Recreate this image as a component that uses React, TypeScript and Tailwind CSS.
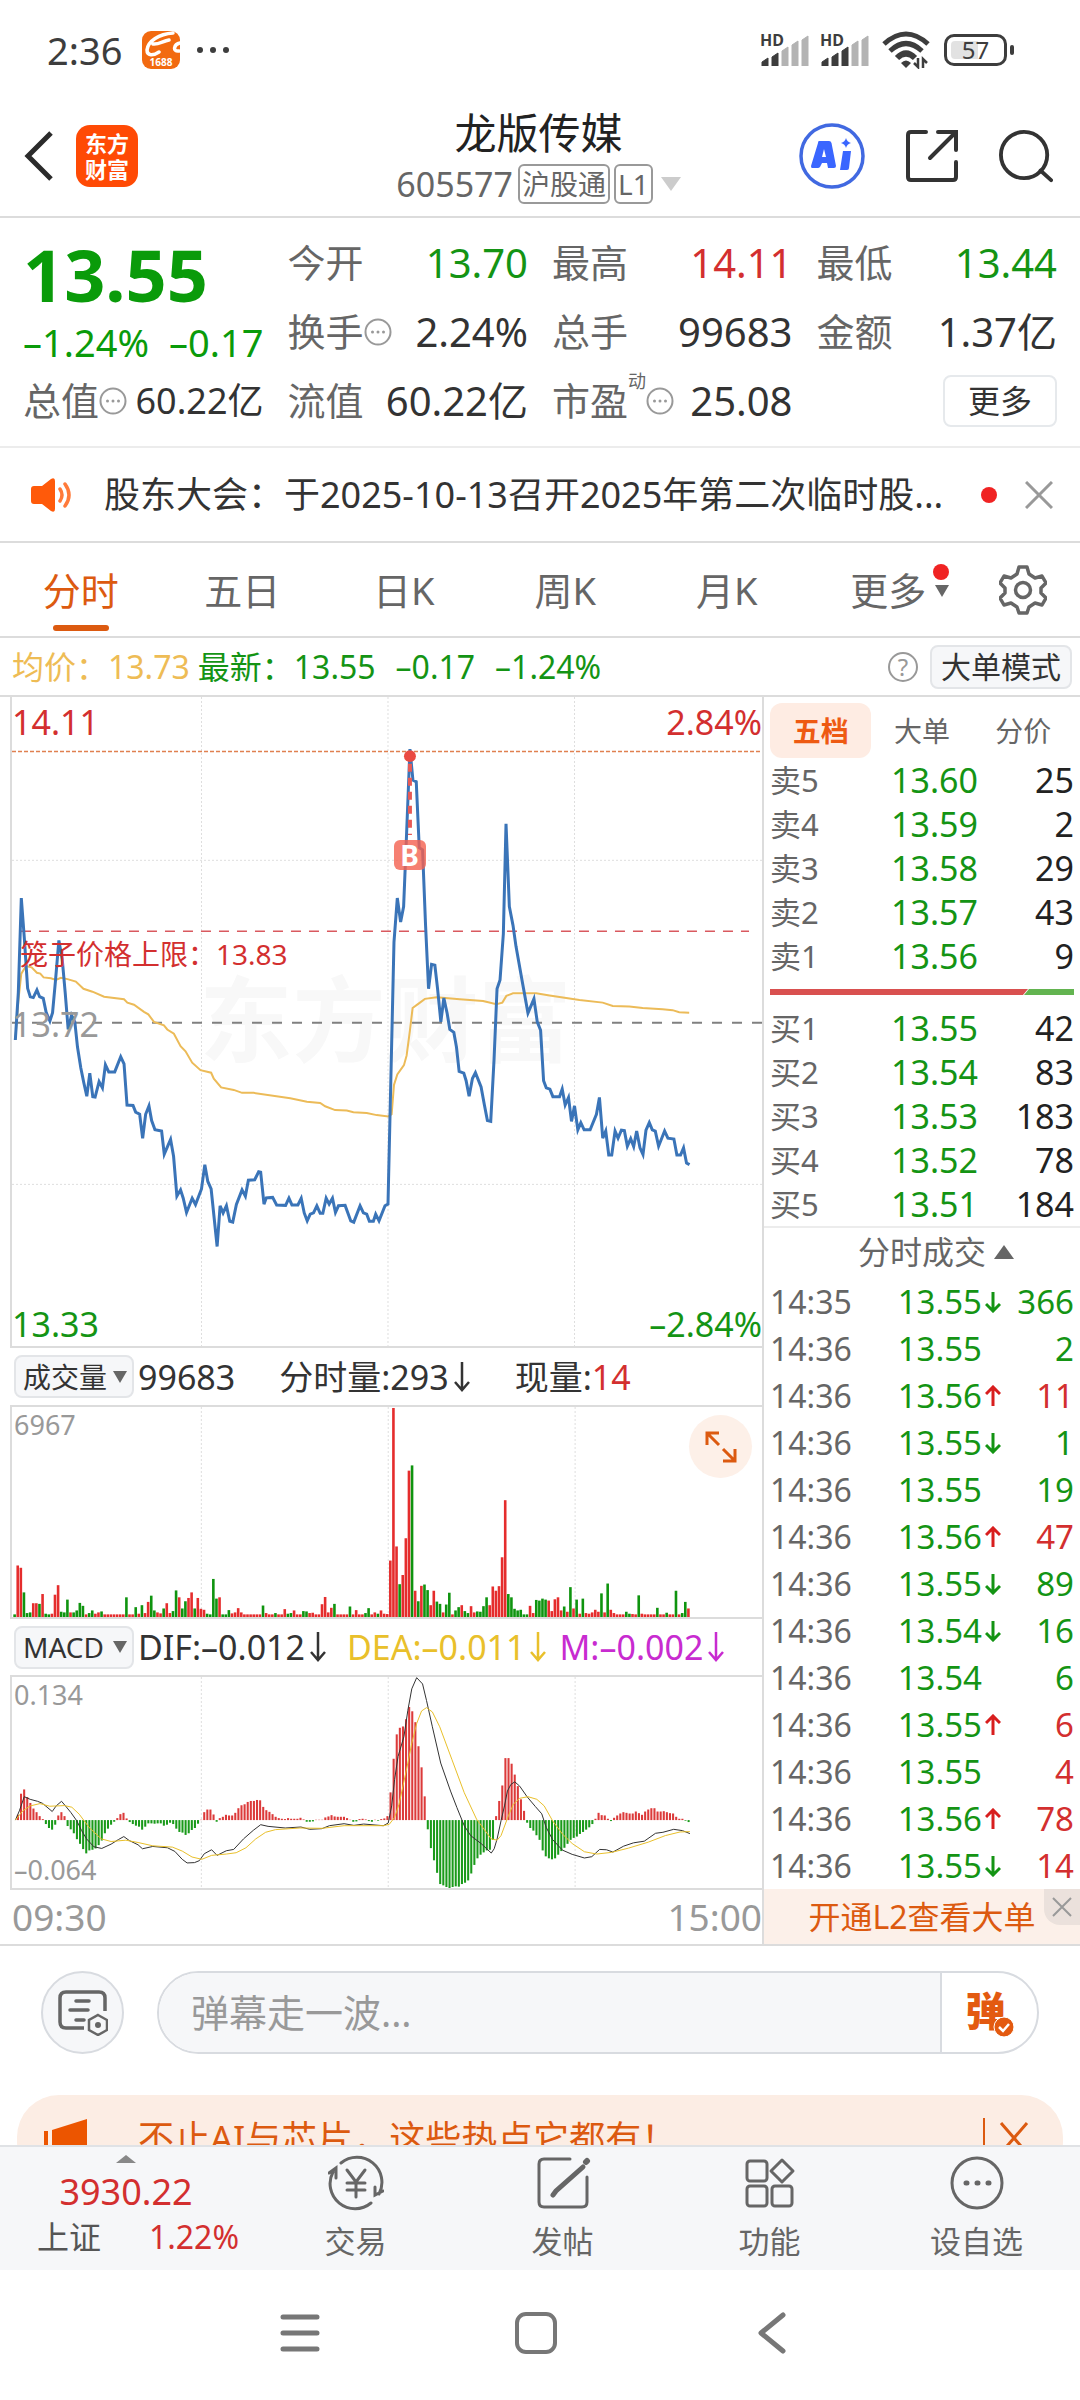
import type { ReactNode } from "react";

const PRICE_LINE =
  "43,833 52,720 61,495 70,590 80,710 88,730 97,732 108,714 116,730 127,734 136,768 147,788 155,768 164,690 174,596 184,640 193,720 202,808 212,774 222,790 230,850 240,900 249,935 258,967 267,912 276,968 283,969 295,932 305,947 314,892 324,909 342,909 360,873 370,890 379,988 397,989 405,1005 417,1010 426,1067 435,1010 445,990 453,1025 463,1047 483,1050 491,1105 510,1070 519,1110 529,1205 540,1190 548,1210 558,1244 575,1210 585,1225 603,1188 613,1130 622,1170 632,1188 650,1325 659,1228 668,1245 678,1228 688,1265 697,1267 708,1225 725,1190 735,1205 744,1167 763,1166 775,1147 781,1148 791,1224 798,1209 817,1208 829,1226 856,1227 866,1210 875,1226 893,1226 903,1210 912,1245 921,1264 930,1248 940,1245 950,1228 960,1246 968,1246 978,1210 987,1224 997,1210 1006,1244 1015,1228 1035,1227 1052,1264 1061,1267 1080,1228 1090,1245 1100,1248 1108,1265 1120,1265 1127,1248 1137,1264 1155,1228 1164,1224 1182,600 1192,495 1202,552 1211,515 1220,340 1230,140 1239,214 1249,218 1258,375 1268,380 1277,560 1286,711 1295,653 1305,655 1313,710 1323,790 1332,733 1342,770 1350,808 1362,815 1370,850 1378,908 1392,912 1399,930 1408,967 1418,925 1427,911 1444,945 1454,988 1463,1025 1473,1027 1483,880 1492,711 1501,690 1511,580 1519,318 1529,515 1540,560 1549,610 1567,690 1585,769 1603,735 1613,790 1623,810 1632,930 1640,947 1651,950 1660,968 1680,968 1688,950 1697,988 1707,970 1716,1027 1725,990 1735,1047 1744,1030 1754,1047 1772,1047 1791,1010 1800,970 1810,1067 1819,1050 1828,1107 1837,1107 1847,1050 1856,1067 1866,1048 1875,1049 1884,1086 1894,1068 1903,1087 1912,1050 1922,1090 1931,1106 1940,1048 1950,1030 1959,1047 1968,1050 1978,1086 1996,1050 2006,1067 2024,1069 2033,1107 2044,1107 2053,1090 2062,1126 2071,1130";

const AVG_LINE =
  "43,833 52,740 61,675 75,657 92,660 108,673 118,675 128,684 150,686 165,690 180,685 200,688 225,694 248,711 275,718 310,730 370,736 380,744 400,749 430,766 443,772 460,790 490,798 500,808 520,818 540,848 555,860 575,887 600,905 632,911 640,925 662,946 700,952 725,959 760,959 870,972 920,980 960,983 975,991 1005,1000 1040,1001 1060,1005 1100,1007 1130,1012 1165,1015 1175,1010 1182,940 1192,915 1212,893 1220,870 1230,810 1238,757 1255,747 1275,735 1310,731 1380,736 1450,740 1490,748 1508,744 1520,728 1540,722 1610,722 1650,727 1740,738 1810,744 1840,752 1890,753 1930,757 1990,760 2020,762 2040,767 2070,768";

const DIF_LINE =
  "30,603 38,575 48,532 60,540 75,546 85,552 105,577 113,560 124,546 132,560 143,580 155,605 165,635 175,660 190,684 206,689 225,676 240,662 251,653 262,665 280,678 289,690 310,683 340,687 355,698 370,722 380,733 395,732 405,726 415,705 430,693 441,710 460,696 475,692 495,660 515,634 530,617 545,622 580,627 612,624 630,631 655,629 670,620 700,614 720,619 740,615 780,620 790,612 797,560 803,480 810,410 822,350 830,270 838,205 848,171 860,190 868,240 880,320 897,430 917,515 930,565 945,620 958,650 980,675 1000,703 1006,690 1012,660 1020,605 1027,560 1033,515 1040,495 1048,487 1058,500 1073,532 1090,562 1103,584 1112,625 1125,662 1145,694 1165,707 1190,718 1205,714 1221,692 1235,693 1248,700 1270,682 1290,672 1312,667 1335,643 1350,640 1372,631 1390,635 1405,644";

const DEA_LINE =
  "30,603 45,575 60,560 80,553 100,561 130,559 145,564 160,585 180,625 205,660 225,668 255,664 280,671 310,681 350,685 370,697 390,715 410,722 430,710 460,706 480,702 500,687 520,660 540,640 560,632 610,627 655,628 700,620 780,620 792,616 803,595 812,555 820,500 830,430 838,370 848,310 858,272 868,262 880,275 895,320 920,420 945,520 970,600 985,630 1000,660 1012,664 1020,650 1035,590 1045,555 1058,537 1075,532 1093,540 1108,560 1125,605 1145,645 1165,674 1190,699 1215,706 1245,701 1280,688 1320,670 1355,650 1385,639 1405,638";

// one bar per minute, positive = red, negative = green
const VOLUME = [
  -8, 157, 150, -75, -12, -14, 42, 42, -40, 70, -10, -8, 10, 68, 97, -16, -14,
  -53, 14, -14, -20, -43, -34, 8, -12, -20, 10, 14, -17, 8, 8, 8, 8, 8, 8, 8,
  -60, 8, 8, -30, 10, -36, 12, 46, -65, -20, 14, 11, -26, 42, 12, -18, -81, 60,
  -26, -48, 58, 75, -26, 58, 25, 22, -10, -8, -116, -56, 60, -8, -8, -21, 11, 14,
  27, 14, 8, 8, 8, 8, 8, 8, -35, 12, 8, 8, -12, 8, 8, 24, -10, -12, 20, 8, 8,
  -18, -17, 12, 13, 8, 8, 39, 61, 14, 28, -40, 8, 8, 8, 8, -32, 8, 21, 8, 8, -12,
  -27, 8, 14, -10, 20, 10, 9, 172, 637, 215, -100, 128, 240, 446, -462, 80, -48,
  95, -99, -82, 36, 80, -47, -40, 14, -38, -74, 8, -20, -30, 36, -18, -12, 33, 14,
  -17, -16, -33, -60, 36, 93, 80, 94, 182, 356, -70, -60, -25, -20, -22, -8, -8,
  34, 12, -52, -50, -56, -53, 50, 18, 54, 60, 20, -32, 16, -91, 26, -53, 10, -56,
  12, 10, 14, 22, 16, -72, 14, -102, 22, 12, 8, 8, 8, -16, -10, 9, 8, -66, 10, 8,
  8, 8, 8, -28, 8, 8, -13, 8, 8, -80, 8, -12, -46, 26,
];

const MACD = [
  16, 80, 93, 70, 52, 35, 24, 12, 3, -12, -24, -29, -14, 14, 24, 12, -18, -28,
  -40, -58, -72, -88, -101, -92, -90, -86, -76, -62, -40, -26, -14, -5, 6, 18, 22,
  5, -6, -12, -17, -20, -29, -20, -10, -10, -11, -10, -10, -17, -14, -8, -12, -26,
  -36, -38, -45, -40, -30, -24, -11, 1, 24, 32, 32, 17, -5, 6, 10, 16, 14, 14, 22,
  36, 45, 48, 55, 58, 58, 61, 60, 40, 30, 25, 18, 10, 6, 4, 3, 6, 4, 4, 4, 7, 2,
  -5, -5, -4, 1, 1, 1, 8, 11, 15, 11, 10, 10, 10, 6, 1, -5, -4, 3, 4, 2, -3, -5,
  1, -2, 3, 5, 12, 84, 186, 260, 280, 284, 306, 343, 330, 297, 224, 160, 72, -28,
  -85, -122, -160, -194, -198, -203, -206, -203, -201, -202, -194, -190, -183,
  -162, -136, -116, -105, -98, -92, -90, -60, 12, 58, 105, 188, 188, 171, 138,
  103, 63, 28, -8, -24, -32, -46, -60, -92, -110, -116, -119, -116, -105, -94,
  -84, -72, -60, -54, -50, -42, -36, -29, -22, -12, 4, 22, 15, 14, 4, -3, 7, 14,
  20, 24, 22, 20, 20, 26, 21, 16, 26, 32, 36, 36, 26, 26, 27, 24, 21, 20, 10, 4,
  4, -2, -6,
];

const ASKS = [
  ["卖5", "13.60", "25"],
  ["卖4", "13.59", "2"],
  ["卖3", "13.58", "29"],
  ["卖2", "13.57", "43"],
  ["卖1", "13.56", "9"],
];

const BIDS = [
  ["买1", "13.55", "42"],
  ["买2", "13.54", "83"],
  ["买3", "13.53", "183"],
  ["买4", "13.52", "78"],
  ["买5", "13.51", "184"],
];

interface Deal {
  time: string;
  price: string;
  dir?: "up" | "down";
  vol: string;
  buy?: boolean;
}

const DEALS: Deal[] = [
  { time: "14:35", price: "13.55", dir: "down", vol: "366" },
  { time: "14:36", price: "13.55", vol: "2" },
  { time: "14:36", price: "13.56", dir: "up", vol: "11", buy: true },
  { time: "14:36", price: "13.55", dir: "down", vol: "1" },
  { time: "14:36", price: "13.55", vol: "19" },
  { time: "14:36", price: "13.56", dir: "up", vol: "47", buy: true },
  { time: "14:36", price: "13.55", dir: "down", vol: "89" },
  { time: "14:36", price: "13.54", dir: "down", vol: "16" },
  { time: "14:36", price: "13.54", vol: "6" },
  { time: "14:36", price: "13.55", dir: "up", vol: "6", buy: true },
  { time: "14:36", price: "13.55", vol: "4", buy: true },
  { time: "14:36", price: "13.56", dir: "up", vol: "78", buy: true },
  { time: "14:36", price: "13.55", dir: "down", vol: "14", buy: true },
];

const Signal = ({ level }: { level: number }) => (
  <div className="relative h-8 w-[50px]">
    <span className="absolute left-0 top-0 text-[16px] font-bold leading-[12px]">
      HD
    </span>
    <svg viewBox="0 0 50 32" className="h-8 w-[50px]">
      {[0, 1, 2, 3, 4].map((i) => {
        const h = [8, 13, 19, 25, 30][i];
        return (
          <path
            key={i}
            d={`M${2 + i * 10} 32v${-(h - 4)}l6 -4v${h}z`}
            fill={i < level ? "#3d3d3d" : "#b3b3b3"}
            stroke={i < level ? "#3d3d3d" : "#b3b3b3"}
            strokeLinejoin="round"
          />
        );
      })}
    </svg>
  </div>
);

const StatusBar = () => (
  <div className="flex h-[104px] items-center pb-1 pl-[47px] pr-[66px] text-[#3d3d3d]">
    <span className="text-[38px] leading-[48px]">2:36</span>
    <svg viewBox="0 0 38 38" className="ml-5 size-[38px]">
      <rect width="38" height="38" rx="9" fill="#f26a10" />
      <path
        d="M31 2C17 3 6 10 5 19c0 6 6 6 12 2M11 13c5 1 10-3 16-4M38 12c-6 1-8 9-1 8"
        fill="none"
        stroke="#fff"
        strokeWidth="3.5"
        strokeLinecap="round"
      />
      <text x="19" y="35" fontSize="10" fontWeight="700" fill="#fff" textAnchor="middle">
        1688
      </text>
    </svg>
    <svg viewBox="0 0 34 8" className="ml-4 h-2 w-[34px]" fill="#3d3d3d">
      <circle cx="4" cy="4" r="3" />
      <circle cx="17" cy="4" r="3" />
      <circle cx="30" cy="4" r="3" />
    </svg>
    <div className="ml-auto flex items-center">
      <Signal level={2} />
      <div className="ml-[10px]">
        <Signal level={3} />
      </div>
      <svg viewBox="0 0 48 38" className="ml-3 h-[38px] w-12" fill="none" stroke="#3d3d3d" strokeWidth="5">
        <path d="M2 13Q24-7 46 13" />
        <path d="M8 20Q24 5 40 20" />
        <path d="M15 27Q24 18 33 27" strokeWidth="6" />
        <path d="M19 32q5-5 10 0l-5 5z" fill="#3d3d3d" stroke="none" />
        <path d="M36 27v9l-4-4M41 37v-9l4 4" strokeWidth="2.5" />
      </svg>
      <div className="ml-[14px] flex items-center">
        <div className="flex h-8 w-[63px] items-center justify-center rounded-[10px] border-[3px] border-[#3d3d3d] p-1">
          <span className="h-full w-full rounded bg-linear-to-r from-[#e2e2e2] from-55% to-white to-55% text-center text-[24px] leading-[18px]">
            57
          </span>
        </div>
        <div className="ml-[3px] h-[10px] w-1 rounded bg-[#3d3d3d]" />
      </div>
    </div>
  </div>
);

const Header = () => (
  <header className="grid h-[114px] grid-cols-[1fr_auto_1fr] items-center border-b-2 border-[#dcdcdc] pb-2 pl-6 pr-[27px]">
    <div className="flex items-center gap-[22px]">
      <button aria-label="返回">
        <svg viewBox="0 0 30 50" className="h-[50px] w-[30px]" fill="none" stroke="#2b2b2b" strokeWidth="5">
          <path d="M27 2L4 25l23 23" />
        </svg>
      </button>
      <button className="flex size-[62px] flex-col items-center justify-center rounded-[14px] bg-[#ff4a05] text-[22px] font-bold leading-[26px] text-white">
        <span>东方</span>
        <span>财富</span>
      </button>
    </div>
    <div className="flex flex-col items-center">
      <h1 className="text-[42px] leading-[56px] text-[#222]">龙版传媒</h1>
      <div className="flex items-center text-[34px] leading-[46px] text-[#666]">
        <span>605577</span>
        <span className="ml-[5px] rounded-md border-2 border-[#999] px-[2px] text-[28px] leading-[36px]">
          沪股通
        </span>
        <span className="ml-1 rounded-md border-2 border-[#999] px-[2px] text-[28px] leading-[36px]">
          L1
        </span>
        <svg viewBox="0 0 20 14" className="ml-2 h-[14px] w-5" fill="#ccc">
          <path d="M0 0h20L10 14z" />
        </svg>
      </div>
    </div>
    <div className="flex items-center justify-end gap-[41px]">
      <button aria-label="AI">
        <svg viewBox="0 0 66 66" className="size-[66px]">
          <circle cx="33" cy="33" r="31" fill="none" stroke="#4169e1" strokeWidth="3.5" />
          <path
            d="M20 18h10q2 0 2.500 2L37 43q0 2-2 2h-6l-1-5h-5l-2 4q-1 1-2 1h-6q-1 0-1-2l7-23q0-2 1-2zm5 8l-2 8h4z"
            fill="#3a66ff"
            fillRule="evenodd"
          />
          <path d="M44 28h8l-2 17q0 2-2 2h-7zM47 15q1 4 5 5q-4 1-5 5q-1-4-5-5q4-1 5-5z" fill="#3a66ff" />
        </svg>
      </button>
      <button aria-label="分享">
        <svg viewBox="0 0 52 54" className="h-[54px] w-[52px]" fill="none" stroke="#333" strokeWidth="4" strokeLinecap="round">
          <path d="M20 3H5q-3 0-3 3v42q0 3 3 3h42q3 0 3-3V33M32 3h18v18M49 4L24 29" />
        </svg>
      </button>
      <button aria-label="搜索">
        <svg viewBox="0 0 56 56" className="size-[54px]" fill="none" stroke="#333" strokeWidth="4" strokeLinecap="round">
          <circle cx="26" cy="27" r="24" />
          <path d="M43 43l11 10" />
        </svg>
      </button>
    </div>
  </header>
);

const Dots = () => (
  <svg viewBox="0 0 28 28" className="h-7 w-7 shrink-0" fill="#999">
    <circle cx="14" cy="14" r="12.500" fill="none" stroke="#999" strokeWidth="2" />
    <circle cx="8.500" cy="14" r="1.500" />
    <circle cx="14" cy="14" r="1.500" />
    <circle cx="19.500" cy="14" r="1.500" />
  </svg>
);

interface StatProps {
  label: string;
  children: ReactNode;
  color?: string;
  dots?: boolean;
  sup?: string;
  small?: boolean;
}

const Stat = ({ label, children, color = "text-[#333]", dots, sup, small }: StatProps) => (
  <div className="flex items-center whitespace-nowrap">
    <span className="text-[38px] text-[#666]">{label}</span>
    {sup && <sup className="self-start text-[18px] leading-[48px] text-[#666]">{sup}</sup>}
    {dots && <Dots />}
    <span className={`ml-auto ${small ? "text-[36px]" : "text-[40px]"} ${color}`}>
      {children}
    </span>
  </div>
);

const Quote = () => (
  <section className="grid grid-cols-4 grid-rows-[69px_69px_69px] gap-x-6 border-b-2 border-[#ececec] px-[23px] pb-[11px] pt-[10px]">
    <div className="row-span-2 flex flex-col text-[#0a9b0a]">
      <strong className="text-[72px] leading-[92px]">13.55</strong>
      <div className="flex justify-between text-[38px] leading-[44px]">
        <span>–1.24%</span>
        <span>–0.17</span>
      </div>
    </div>
    <Stat label="今开" color="text-[#149414]">13.70</Stat>
    <Stat label="最高" color="text-[#d32f2f]">14.11</Stat>
    <Stat label="最低" color="text-[#149414]">13.44</Stat>
    <Stat label="换手" dots>2.24%</Stat>
    <Stat label="总手">99683</Stat>
    <Stat label="金额">1.37亿</Stat>
    <Stat label="总值" dots small>60.22亿</Stat>
    <Stat label="流值">60.22亿</Stat>
    <Stat label="市盈" sup="动" dots>25.08</Stat>
    <button className="h-[52px] w-[114px] self-center justify-self-end rounded-lg border-2 border-[#e6e9ec] text-[32px] leading-[44px] text-[#333]">
      更多
    </button>
  </section>
);

const Notice = () => (
  <section className="flex h-[95px] items-center border-b-2 border-[#dcdcdc] pl-[31px] pr-[27px]">
    <svg viewBox="0 0 42 34" className="h-[34px] w-[42px] shrink-0" fill="#ff5a0a">
      <path d="M3 8h8L20 1q4-2 4 2v28q0 4-4 2l-9-7H3q-3 0-3-3V11q0-3 3-3z" />
      <path d="M29 11q4 6 0 12M34 6q8 11 0 22" fill="none" stroke="#ff7a3a" strokeWidth="3.500" strokeLinecap="round" />
    </svg>
    <a href="#notice" className="ml-[31px] min-w-0 flex-1 truncate text-[36px] leading-[48px] text-[#333]">
      股东大会：于2025-10-13召开2025年第二次临时股...
    </a>
    <span className="ml-9 size-4 shrink-0 rounded-full bg-[#f02323]" />
    <button aria-label="关闭" className="ml-7 shrink-0">
      <svg viewBox="0 0 28 28" className="size-7" stroke="#999" strokeWidth="3">
        <path d="M1 1l26 26M27 1L1 27" />
      </svg>
    </button>
  </section>
);

const Tabs = () => (
  <nav className="flex h-[95px] items-center border-b-2 border-[#dcdcdc] pr-[33px] text-[38px] leading-[48px] text-[#666]">
    <button className="relative h-full flex-1 text-[#dc5a10]">
      分时
      <span className="absolute bottom-[5px] left-1/2 h-[6px] w-[56px] -translate-x-1/2 rounded-full bg-[#dc5a10]" />
    </button>
    {["五日", "日K", "周K", "月K"].map((t) => (
      <button key={t} className="h-full flex-1">
        {t}
      </button>
    ))}
    <button className="relative h-full flex-1">
      更多
      <span className="absolute right-5 top-[21px] size-4 rounded-full bg-[#f02323]" />
      <svg viewBox="0 0 14 12" className="absolute right-5 top-[42px] h-3 w-[14px]" fill="#666">
        <path d="M0 0h14L7 12z" />
      </svg>
    </button>
    <button aria-label="设置" className="ml-[30px]">
      <svg viewBox="0 0 48 50" className="h-[50px] w-12" fill="none" stroke="#666" strokeWidth="3.500" strokeLinejoin="round">
        <path d="M20 2h8l2 7l6 4l7-2l4 7l-5 5v5l5 5l-4 7l-7-2l-6 4l-2 6h-8l-2-6l-6-4l-7 2l-4-7l5-5v-5l-5-5l4-7l7 2l6-4z" />
        <circle cx="24" cy="25" r="7.500" />
      </svg>
    </button>
  </nav>
);

const AvgRow = () => (
  <section className="flex h-[59px] items-center whitespace-nowrap border-b-2 border-[#dcdcdc] pl-3 pr-2 text-[32px] leading-[40px] text-[#149414]">
    <span className="text-[#eebc55]">均价：13.73</span>
    <span className="ml-2">最新：13.55</span>
    <span className="ml-5">–0.17</span>
    <span className="ml-5">–1.24%</span>
    <button aria-label="说明" className="ml-auto size-[30px] rounded-full border-2 border-[#999] text-[24px] leading-[26px] text-[#999]">
      ?
    </button>
    <button className="ml-3 h-11 rounded-lg border-2 border-[#e3e5e8] bg-[#f6f7f9] px-[9px] text-[30px] leading-[40px] text-[#333]">
      大单模式
    </button>
  </section>
);

const grid = {
  stroke: "#dedede",
  strokeDasharray: "2 2",
  vectorEffect: "non-scaling-stroke",
} as const;

const PriceChart = () => (
  <div className="relative h-[651px] border-b-2 border-l-2 border-[#dcdcdc] text-[34px] leading-[40px]">
    <span className="absolute left-1/4 top-[262px] text-[93px] font-bold leading-[120px] text-[#f8f8f8]">
      东方财富
    </span>
    <svg viewBox="33 16 2256 1546" preserveAspectRatio="none" className="absolute inset-0 h-full w-full" fill="none">
      <path d="M603 16V1562M1164 16V1562M1725 16V1562M33 405H2289M33 1177H2289" {...grid} />
      <path d="M33 146H2289" stroke="#e08050" strokeDasharray="4 2" strokeWidth="1.500" vectorEffect="non-scaling-stroke" />
      <path d="M60 574H2250" stroke="#d9595f" strokeDasharray="10 8" strokeWidth="1.500" vectorEffect="non-scaling-stroke" />
      <path d="M33 792H2289" stroke="#808080" strokeDasharray="10 10" strokeWidth="2" vectorEffect="non-scaling-stroke" />
      <polyline points={AVG_LINE} stroke="#ecbb58" strokeWidth="2" vectorEffect="non-scaling-stroke" />
      <polyline points={PRICE_LINE} stroke="#3a74b8" strokeWidth="3" vectorEffect="non-scaling-stroke" />
      <path d="M1230 175V345" stroke="#e85a55" strokeWidth="4" strokeDasharray="8 6" vectorEffect="non-scaling-stroke" />
      <ellipse cx="1230" cy="157" rx="18" ry="14" fill="#ea4a42" />
    </svg>
    <span className="absolute left-[53%] top-[143px] h-[30px] w-8 -translate-x-1/2 rounded-md bg-[#f4604f]/80 text-center text-[28px] font-bold leading-[30px] text-white">
      B
    </span>
    <span className="absolute left-0 top-[5px] text-[#d32f2f]">14.11</span>
    <span className="absolute right-0 top-[5px] text-[#d32f2f]">2.84%</span>
    <span className="absolute left-2 top-[237px] text-[28px] text-[#d32f2f]">
      笼子价格上限：13.83
    </span>
    <span className="absolute left-0 top-[307px] text-[#999]">13.72</span>
    <span className="absolute bottom-[2px] left-0 text-[#149414]">13.33</span>
    <span className="absolute bottom-[2px] right-0 text-[#149414]">–2.84%</span>
  </div>
);

const DownArrow = () => (
  <svg viewBox="0 0 18 32" className="ml-1 h-8 w-[18px]" fill="none" stroke="currentColor" strokeWidth="2.500">
    <path d="M9 1v28M2 21l7 8l7-8" />
  </svg>
);

const IndicatorButton = ({ children }: { children: ReactNode }) => (
  <button className="flex h-[43px] w-[120px] items-center justify-between rounded-lg border-2 border-[#e3e5e8] bg-[#f6f7f9] pl-[7px] pr-[5px] text-[28px] leading-[38px] text-[#333]">
    {children}
    <svg viewBox="0 0 14 12" className="h-3 w-[14px]" fill="#666">
      <path d="M0 0h14L7 12z" />
    </svg>
  </button>
);

const VolumeChart = () => (
  <div className="relative h-[214px] border-2 border-r-0 border-[#dcdcdc]">
    <svg viewBox="23 197 1529 640" preserveAspectRatio="none" className="absolute inset-0 h-full w-full" fill="none">
      <path d="M409 197V837M790 197V837M1171 197V837" {...grid} />
      {VOLUME.map((v, i) => (
        <rect
          key={i}
          x={25.7 + i * 6.33}
          y={837 - Math.abs(v)}
          width="5.300"
          height={Math.abs(v)}
          fill={v > 0 ? "#e52d2d" : "#0f940f"}
        />
      ))}
    </svg>
    <span className="absolute left-[2px] top-0 text-[27px] leading-[36px] text-[#999]">6967</span>
    <button
      aria-label="全屏"
      className="absolute right-[10px] top-2 flex size-[63px] items-center justify-center rounded-full bg-[#fdf0e8]"
    >
      <svg viewBox="0 0 32 32" className="size-8" fill="none" stroke="#dc5a10" strokeWidth="3">
        <path d="M2 14V2h12M2 2l12 12M18 30h12V18M30 30L18 18" />
      </svg>
    </button>
  </div>
);

const MacdChart = () => (
  <div className="relative h-[215px] border-2 border-r-0 border-[#dcdcdc] text-[27px] leading-[36px] text-[#999]">
    <svg viewBox="23 169 1529 640" preserveAspectRatio="none" className="absolute inset-0 h-full w-full" fill="none">
      <path d="M409 169V809M790 169V809M1171 169V809" {...grid} />
      {MACD.map((v, i) => (
        <rect
          key={i}
          x={33 + i * 6.33}
          y={v > 0 ? 603 - v : 603}
          width="4.200"
          height={Math.abs(v)}
          fill={v > 0 ? "#dc3a3a" : "#1a9a1a"}
        />
      ))}
      <polyline points={DIF_LINE} stroke="#333" strokeWidth="1" vectorEffect="non-scaling-stroke" />
      <polyline points={DEA_LINE} stroke="#e9c02b" strokeWidth="1" vectorEffect="non-scaling-stroke" />
    </svg>
    <span className="absolute left-[2px] top-0">0.134</span>
    <span className="absolute bottom-0 left-[2px]">–0.064</span>
  </div>
);

const Charts = () => (
  <div className="min-w-0 flex-1 border-r-2 border-[#dcdcdc] pl-[10px] text-[34px] leading-[40px] text-[#333]">
    <PriceChart />
    <div className="flex h-[57px] items-center whitespace-nowrap pl-1">
      <IndicatorButton>成交量</IndicatorButton>
      <span className="ml-1">99683</span>
      <span className="ml-11 flex items-center">
        分时量:293
        <DownArrow />
      </span>
      <span className="ml-11">
        现量:<span className="text-[#d32f2f]">14</span>
      </span>
    </div>
    <VolumeChart />
    <div className="flex h-[56px] items-center whitespace-nowrap pl-1">
      <IndicatorButton>MACD</IndicatorButton>
      <span className="ml-1 flex items-center">
        DIF:–0.012
        <DownArrow />
      </span>
      <span className="ml-5 flex items-center text-[#e9c02b]">
        DEA:–0.011
        <DownArrow />
      </span>
      <span className="ml-3 flex items-center text-[#c82bd0]">
        M:–0.002
        <DownArrow />
      </span>
    </div>
    <MacdChart />
    <div className="flex h-[54px] items-center justify-between pl-[2px] text-[37px] text-[#999]">
      <span>09:30</span>
      <span>15:00</span>
    </div>
  </div>
);

const Levels = ({ rows }: { rows: string[][] }) => (
  <table className="w-full table-fixed text-[34px] leading-[44px]">
    <tbody>
      {rows.map(([name, price, vol]) => (
        <tr key={name} className="h-11">
          <td className="w-[80px] p-0 text-[31px] text-[#666]">{name}</td>
          <td className="p-0 text-right text-[#149414]">{price}</td>
          <td className="w-24 p-0 text-right text-[#222]">{vol}</td>
        </tr>
      ))}
    </tbody>
  </table>
);

const OrderBook = () => (
  <aside className="flex w-[316px] shrink-0 flex-col">
    <div className="px-[6px] pt-[6px]">
      <div className="flex h-[55px] text-[28px] leading-[40px] text-[#666]">
        <button className="flex-1 rounded-xl bg-[#feece3] font-bold text-[#ee5a12]">五档</button>
        <button className="flex-1">大单</button>
        <button className="flex-1">分价</button>
      </div>
    </div>
    <div className="px-[6px]">
      <Levels rows={ASKS} />
      <svg viewBox="0 0 304 6" preserveAspectRatio="none" className="mb-[11px] mt-[11px] block h-[6px] w-full">
        <path d="M0 0h258l-5 6H0z" fill="#d9504f" />
        <path d="M259 0h45v6h-50z" fill="#63b450" />
      </svg>
      <Levels rows={BIDS} />
    </div>
    <button className="flex h-[52px] items-center justify-center gap-2 border-t-2 border-[#ececec] pb-[3px] pl-7 text-[32px] text-[#666]">
      分时成交
      <svg viewBox="0 0 20 14" className="h-[14px] w-5" fill="#666">
        <path d="M0 14h20L10 0z" />
      </svg>
    </button>
    <div className="px-[6px]">
      <table className="w-full table-fixed text-[33px] leading-[47px]">
        <tbody>
          {DEALS.map((d, i) => (
            <tr key={i} className="h-[47px]">
              <td className="w-[94px] p-0 text-[32px] text-[#666]">{d.time}</td>
              <td className="p-0 text-right text-[#149414]">{d.price}</td>
              <td className="w-6 p-0">
                {d.dir && (
                  <svg
                    viewBox="0 0 16 22"
                    className={`ml-[3px] h-[22px] w-4 ${d.dir === "up" ? "text-[#d81e1e]" : "rotate-180 text-[#149414]"}`}
                    fill="none"
                    stroke="currentColor"
                    strokeWidth="3"
                  >
                    <path d="M8 21V3M1 9l7-7l7 7" />
                  </svg>
                )}
              </td>
              <td className={`w-[68px] p-0 text-right ${d.buy ? "text-[#d32f2f]" : "text-[#149414]"}`}>
                {d.vol}
              </td>
            </tr>
          ))}
        </tbody>
      </table>
    </div>
    <div className="relative flex flex-1 items-center justify-center bg-[#fcf0e9]">
      <a href="#l2" className="text-[32px] leading-[40px] text-[#dc5a10]">
        开通L2查看大单
      </a>
      <button
        aria-label="关闭"
        className="absolute right-0 top-0 flex h-9 w-9 items-center justify-center rounded-bl-2xl bg-[#ebe1dc]"
      >
        <svg viewBox="0 0 20 20" className="size-5" stroke="#999" strokeWidth="2">
          <path d="M1 1l18 18M19 1L1 19" />
        </svg>
      </button>
    </div>
  </aside>
);

const Danmaku = () => (
  <section className="flex items-center gap-[33px] pb-[41px] pl-[41px] pr-[41px] pt-[25px]">
    <button
      aria-label="弹幕设置"
      className="flex size-[83px] shrink-0 items-center justify-center rounded-full border-2 border-[#d8dbe0] bg-[#f6f7f9]"
    >
      <svg viewBox="0 0 50 46" className="h-[46px] w-[50px]" fill="none" stroke="#666" strokeWidth="3.500">
        <path d="M26 38H8q-6 0-6-6V8q0-6 6-6h33q6 0 6 6v13" />
        <path d="M18 11h13M12 20h18M18 30h8" strokeLinecap="round" />
        <path d="M40 25l9 5v10l-9 5l-9-5V30z" strokeWidth="2.500" />
        <circle cx="40" cy="35" r="3" fill="#666" stroke="none" />
      </svg>
    </button>
    <div className="flex h-[83px] min-w-0 flex-1 overflow-hidden rounded-full border-2 border-[#d8dbe0]">
      <input
        aria-label="弹幕"
        placeholder="弹幕走一波..."
        className="min-w-0 flex-1 bg-[#f6f7f9] pl-8 text-[38px] placeholder:text-[#999]"
      />
      <button className="relative w-[97px] border-l-2 border-[#d8dbe0] pb-1 pr-2 text-[40px] font-black leading-[74px] text-[#e35a10]">
        弹
        <svg viewBox="0 0 22 22" className="absolute bottom-[14px] right-[22px] size-[22px]">
          <circle cx="11" cy="11" r="10" fill="#e35a10" stroke="#fff" />
          <path d="M6 11l4 4l6-7" fill="none" stroke="#fff" strokeWidth="2.500" />
        </svg>
      </button>
    </div>
  </section>
);

const Promo = () => (
  <section className="h-[50px] overflow-hidden px-[17px]">
    <div className="flex h-[88px] items-center rounded-[42px] bg-[#fcede4] pl-[27px] pr-[34px] text-[#dc5a10]">
      <svg viewBox="0 0 44 44" className="size-11" fill="#ec5500">
        <path d="M0 14h4v22H0zM8 13L43 2v42L8 34z" />
      </svg>
      <a href="#promo" className="ml-[50px] text-[36px] leading-[48px]">
        不止AI与芯片，这些热点它都有！
      </a>
      <button aria-label="关闭" className="ml-auto flex h-[42px] items-center border-l-2 border-[#dc5a10] pl-[14px]">
        <svg viewBox="0 0 30 38" className="h-[38px] w-[30px]" stroke="#dc5a10" strokeWidth="3">
          <path d="M2 3l26 30M28 3L2 33" />
        </svg>
      </button>
    </div>
  </section>
);

const BarItem = ({ label, children }: { label: string; children: ReactNode }) => (
  <button className="flex flex-1 flex-col items-center pt-2 text-[31px] leading-[40px] text-[#666]">
    <svg viewBox="0 0 56 56" className="mb-[10px] size-14" fill="none" stroke="#666" strokeWidth="3" strokeLinecap="round">
      {children}
    </svg>
    {label}
  </button>
);

const BottomBar = () => (
  <footer className="flex h-[125px] border-t-2 border-[#e0e2e5] bg-[#f6f7f9]">
    <button className="flex w-[252px] flex-col items-center text-[#d32f2f]">
      <svg viewBox="0 0 20 8" className="mt-2 h-2 w-5" fill="#888">
        <path d="M0 8h20L10 0z" />
      </svg>
      <span className="mt-[6px] text-[36px] leading-[46px]">3930.22</span>
      <span className="ml-6 flex w-[202px] justify-between text-[32px] leading-[44px]">
        <span className="text-[#555]">上证</span>
        <span>1.22%</span>
      </span>
    </button>
    <BarItem label="交易">
      <path d="M13 8a25 25 0 0 1 38 31M43 48A25 25 0 0 1 5 17M1 18l7-5v10M55 36l-8 4v-8" />
      <path d="M19 15l9 12l9-12M28 27v15M19 28h18M19 35h18" />
    </BarItem>
    <BarItem label="发帖">
      <path d="M35 4H9q-5 0-5 5v38q0 5 5 5h38q5 0 5-5V22" />
      <path d="M48 12L21 36l-3 4" strokeWidth="5" />
      <path d="M52 6l-1 1" strokeWidth="6" />
    </BarItem>
    <BarItem label="功能">
      <rect x="5" y="6" width="20" height="20" rx="3" />
      <path d="M40 5l11 11l-11 11l-11-11z" strokeLinejoin="round" />
      <rect x="5" y="31" width="20" height="20" rx="3" />
      <rect x="30" y="31" width="20" height="20" rx="3" />
    </BarItem>
    <BarItem label="设自选">
      <circle cx="28" cy="28" r="25" />
      <path d="M17 28h1M28 28h1M39 28h1" strokeWidth="5" />
    </BarItem>
  </footer>
);

const SystemNav = () => (
  <div className="flex h-[130px] items-center justify-center gap-[192px] pb-1 pr-2">
    <button aria-label="最近任务">
      <svg viewBox="0 0 44 44" className="size-11" stroke="#777" strokeWidth="5" strokeLinecap="round">
        <path d="M5 6h34M5 22h34M5 38h34" />
      </svg>
    </button>
    <button aria-label="主页">
      <svg viewBox="0 0 44 44" className="size-11" fill="none" stroke="#777" strokeWidth="4">
        <rect x="3" y="3" width="38" height="38" rx="9" />
      </svg>
    </button>
    <button aria-label="返回">
      <svg viewBox="0 0 44 44" className="size-11" fill="none" stroke="#777" strokeWidth="5" strokeLinecap="round" strokeLinejoin="round">
        <path d="M33 4L11 22l22 18" />
      </svg>
    </button>
  </div>
);

export default function App() {
  return (
    <div className="bg-white font-['Noto_Sans','Noto_Sans_CJK_SC',sans-serif]">
      <StatusBar />
      <Header />
      <Quote />
      <Notice />
      <Tabs />
      <AvgRow />
      <main className="flex border-b-2 border-[#dcdcdc]">
        <Charts />
        <OrderBook />
      </main>
      <Danmaku />
      <Promo />
      <BottomBar />
      <SystemNav />
    </div>
  );
}
